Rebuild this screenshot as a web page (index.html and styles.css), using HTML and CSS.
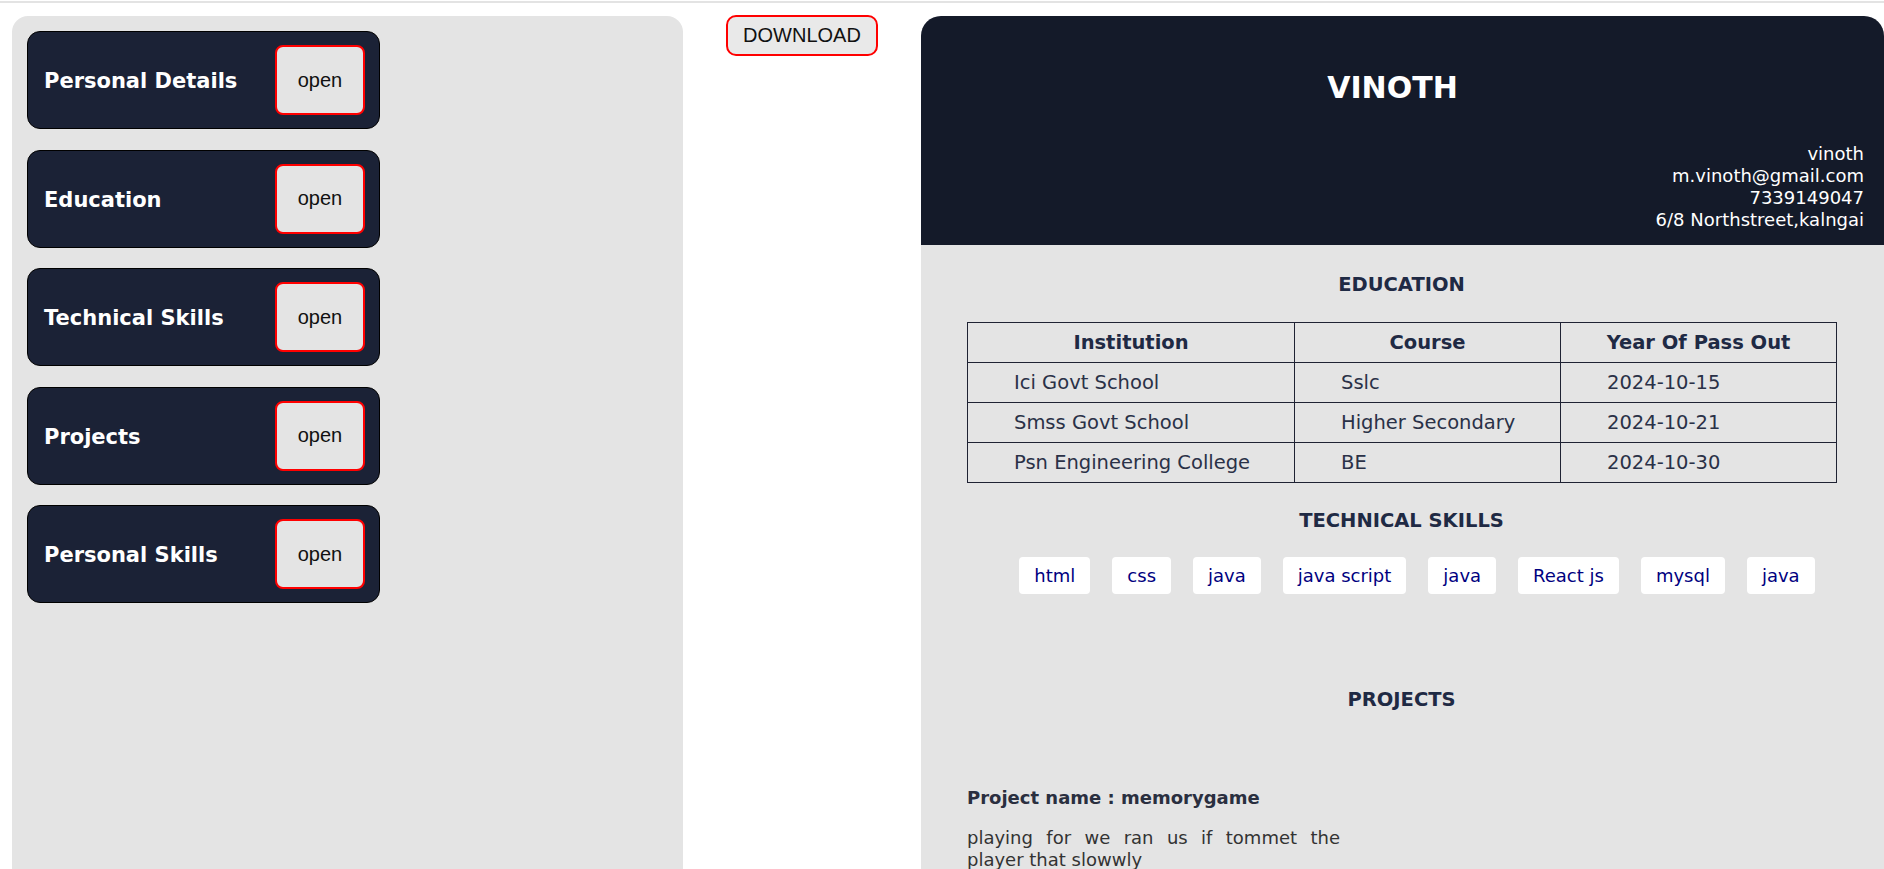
FILE: index.html
```html
<!DOCTYPE html>
<html lang="en">
<head>
<meta charset="utf-8">
<title>Resume Builder</title>
<link rel="stylesheet" href="styles.css">
</head>
<body>
<div class="topbar"></div>
<div class="page">
  <aside class="editor">
    <div class="section-card"><span class="section-title">Personal Details</span><button class="open-btn">open</button></div>
    <div class="section-card"><span class="section-title">Education</span><button class="open-btn">open</button></div>
    <div class="section-card"><span class="section-title">Technical Skills</span><button class="open-btn">open</button></div>
    <div class="section-card"><span class="section-title">Projects</span><button class="open-btn">open</button></div>
    <div class="section-card"><span class="section-title">Personal Skills</span><button class="open-btn">open</button></div>
  </aside>
  <div class="actions">
    <button class="download-btn">DOWNLOAD</button>
  </div>
  <main class="resume">
    <header class="resume-header">
      <h1 class="name">VINOTH</h1>
      <div class="contact">
        <div>vinoth</div>
        <div>m.vinoth@gmail.com</div>
        <div>7339149047</div>
        <div>6/8 Northstreet,kalngai</div>
      </div>
    </header>
    <section class="resume-body">
      <h3 class="heading heading-edu">EDUCATION</h3>
      <table class="edu-table">
        <colgroup><col class="c1"><col class="c2"><col class="c3"></colgroup>
        <thead>
          <tr><th>Institution</th><th>Course</th><th>Year Of Pass Out</th></tr>
        </thead>
        <tbody>
          <tr><td>Ici Govt School</td><td>Sslc</td><td>2024-10-15</td></tr>
          <tr><td>Smss Govt School</td><td>Higher Secondary</td><td>2024-10-21</td></tr>
          <tr><td>Psn Engineering College</td><td>BE</td><td>2024-10-30</td></tr>
        </tbody>
      </table>
      <h3 class="heading heading-skills">TECHNICAL SKILLS</h3>
      <div class="skills">
        <span class="chip">html</span>
        <span class="chip">css</span>
        <span class="chip">java</span>
        <span class="chip">java script</span>
        <span class="chip">java</span>
        <span class="chip">React js</span>
        <span class="chip">mysql</span>
        <span class="chip">java</span>
      </div>
      <h3 class="heading heading-projects">PROJECTS</h3>
      <div class="project">
        <div class="project-name">Project name : memorygame</div>
        <p class="project-desc">playing for we ran us if tommet the player that slowwly</p>
      </div>
    </section>
  </main>
</div>
</body>
</html>
```
FILE: styles.css
```css
html, body {
  margin: 0;
  padding: 0;
  background: #ffffff;
  overflow: hidden;
}

body {
  font-family: "DejaVu Sans", Verdana, sans-serif;
}

.topbar {
  height: 2px;
  margin-top: 1px;
  background: #e3e3e3;
}

.page {
  display: flex;
  align-items: flex-start;
  padding: 12px 0 0 12px;
}

/* left editor panel */
.editor {
  flex: 0 0 671px;
  box-sizing: border-box;
  margin-top: 1px;
  min-height: 900px;
  padding: 15px;
  background: #e4e4e4;
  border-radius: 16px 16px 0 0;
  display: flex;
  flex-direction: column;
  gap: 20.6px;
}

.section-card {
  width: 353px;
  box-sizing: border-box;
  height: 98px;
  display: flex;
  align-items: center;
  justify-content: space-between;
  padding: 0 14px 0 16px;
  background: #1b2236;
  border: 1px solid #000;
  border-radius: 13px;
}

.section-title {
  color: #ffffff;
  font-weight: bold;
  font-size: 21px;
  padding-top: 2px;
}

.open-btn {
  width: 90px;
  height: 70px;
  box-sizing: border-box;
  background: #e4e4e4;
  border: 2px solid #ff0000;
  border-radius: 8px;
  font-family: "Liberation Sans", Arial, sans-serif;
  font-size: 20px;
  color: #111;
  padding: 0;
}

/* middle column */
.actions {
  flex: 0 0 238px;
  display: flex;
  justify-content: center;
}

.download-btn {
  width: 152px;
  height: 41px;
  box-sizing: border-box;
  background: #e9e9e9;
  border: 2px solid #ff0000;
  border-radius: 10px;
  font-family: "Liberation Sans", Arial, sans-serif;
  font-size: 20px;
  color: #111;
  padding: 0;
}

/* resume preview */
.resume {
  flex: 0 0 963px;
  margin-top: 1px;
  min-height: 900px;
  background: #e4e4e4;
  border-radius: 20px 20px 0 0;
  overflow: hidden;
}

.resume-header {
  background: #141a29;
  color: #ffffff;
  padding: 54px 20px 14px 0;
}

.name {
  margin: 0;
  text-align: center;
  font-size: 30px;
  line-height: 36px;
  font-weight: bold;
}

.contact {
  margin-top: 37px;
  text-align: right;
  font-size: 18px;
  line-height: 22px;
}

.resume-body {
  padding: 0 48px 0 46px;
}

.heading {
  margin: 0;
  text-align: center;
  font-size: 19.5px;
  line-height: 23px;
  font-weight: bold;
  color: #1f2a44;
}

.heading-edu {
  padding-top: 28px;
}

.edu-table {
  width: 100%;
  margin-top: 26px;
  border-collapse: collapse;
  table-layout: fixed;
  font-size: 19.5px;
  color: #2a3147;
}

.c1 { width: 327px; }
.c2 { width: 266px; }
.c3 { width: 276px; }

.edu-table th,
.edu-table td {
  border: 1px solid #1f2233;
  height: 40px;
  box-sizing: border-box;
  padding: 0;
}

.edu-table th {
  text-align: center;
  font-weight: bold;
  color: #1f2a44;
}

.edu-table td {
  text-align: left;
  padding-left: 46px;
}

.heading-skills {
  margin-top: 26px;
}

.skills {
  display: flex;
  justify-content: center;
  gap: 22px;
  margin-top: 25px;
  padding-left: 31px;
}

.chip {
  background: #ffffff;
  border-radius: 4px;
  height: 37px;
  line-height: 37px;
  padding: 0 15px;
  font-size: 18px;
  color: #000080;
}

.heading-projects {
  margin-top: 94px;
}

.project {
  margin-top: 76px;
}

.project-name {
  font-size: 18px;
  line-height: 21px;
  font-weight: bold;
  color: #2a2f3f;
}

.project-desc {
  margin: 19px 0 0 0;
  width: 373px;
  text-align: justify;
  font-size: 18px;
  line-height: 22px;
  color: #333;
}
```
